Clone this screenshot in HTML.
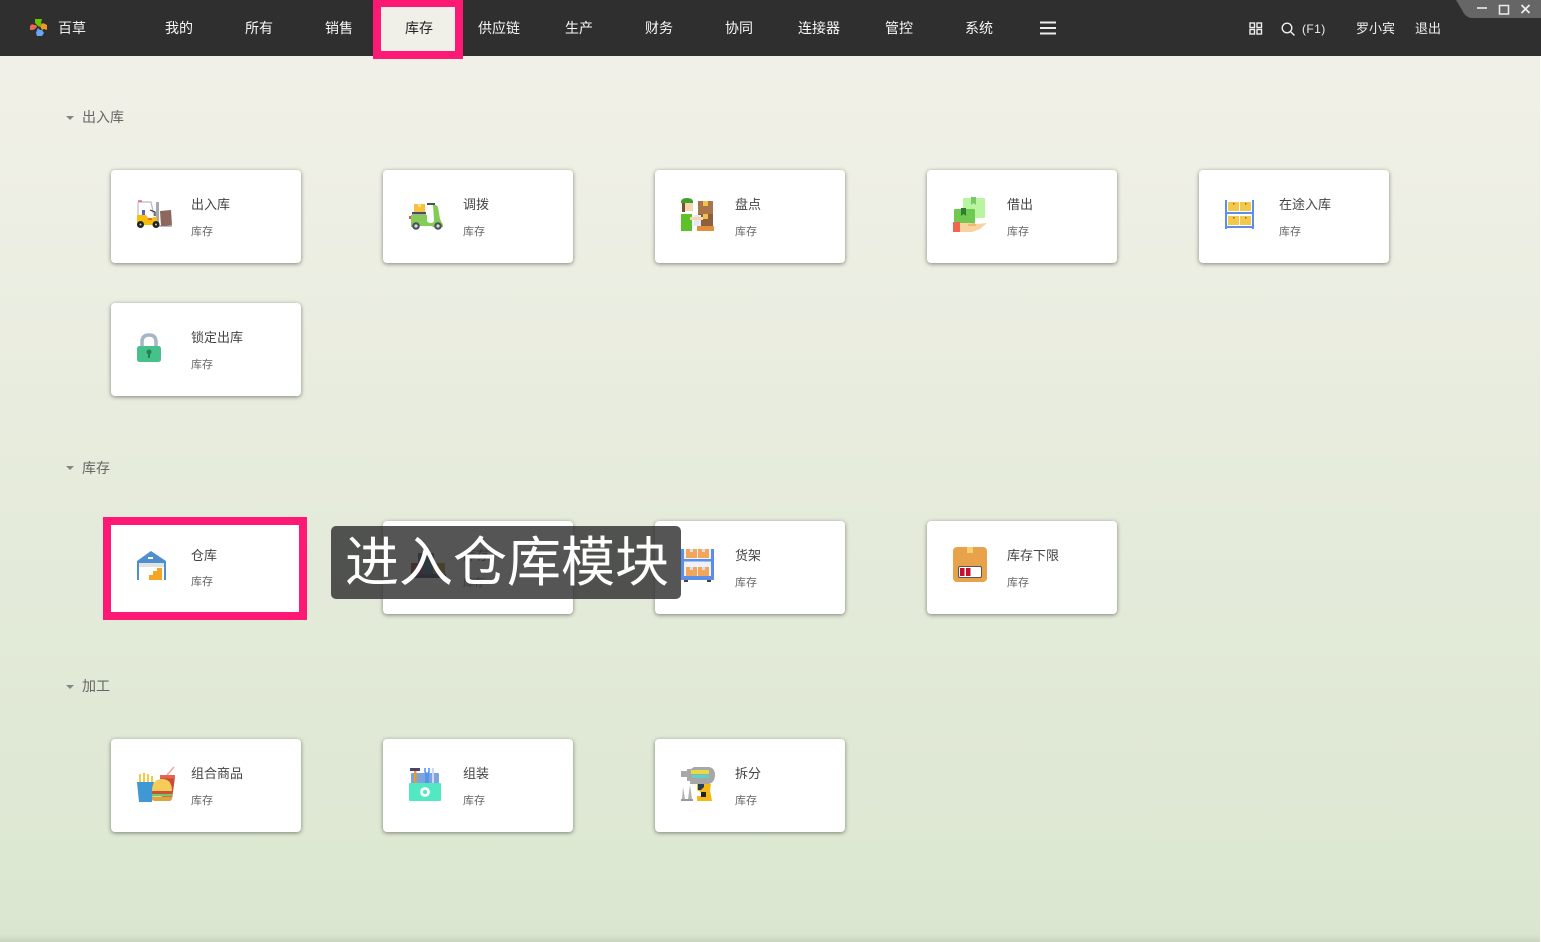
<!DOCTYPE html>
<html lang="zh-CN"><head><meta charset="utf-8"><title>百草</title>
<style>
html,body{margin:0;padding:0}
body{position:relative;width:1541px;height:942px;overflow:hidden;font-family:"Liberation Sans","Noto Sans CJK SC",sans-serif;background:linear-gradient(180deg,#f1f0e8 56px,#e5ebdb 520px,#dce7d1 900px,#dbe6d0 934px,#c9d5c0 942px)}
.t{position:absolute;white-space:nowrap;line-height:20px}
#bar{position:absolute;left:0;top:0;width:1541px;height:56px;background:#2f2f2f}
.n{position:absolute;top:18px;width:80px;text-align:center;color:#f8f8f8;font-size:14px;line-height:20px}
.card{position:absolute;width:190px;height:93px;background:#fff;border-radius:4px;box-shadow:0 1px 4px rgba(0,0,0,.45)}
.card b{position:absolute;left:80px;top:26px;font-weight:400;font-size:13px;line-height:18px;color:#444;white-space:nowrap}
.card i{position:absolute;left:80px;top:54px;font-style:normal;font-size:11px;line-height:16px;color:#666;white-space:nowrap}
.sec{position:absolute;left:82px;font-size:14px;line-height:20px;color:#666}
.tri{position:absolute;left:66px;width:0;height:0;border-left:4.5px solid transparent;border-right:4.5px solid transparent;border-top:4px solid #858585}
svg{position:absolute;left:0;top:0}
</style></head><body>
<div id="bar"></div>
<div class="t" style="left:58px;top:18px;color:#eee;font-size:14px">百草</div>
<div class="n" style="left:139px">我的</div><div class="n" style="left:219px">所有</div><div class="n" style="left:299px">销售</div>
<div style="position:absolute;left:373px;top:-8px;width:74px;height:44px;padding:0;border:8px solid #fe1a74;border-top-width:15px;background:#f1f0e8"></div>
<div class="n" style="left:379px;color:#222">库存</div>
<div class="n" style="left:459px">供应链</div><div class="n" style="left:539px">生产</div><div class="n" style="left:619px">财务</div><div class="n" style="left:699px">协同</div><div class="n" style="left:779px">连接器</div><div class="n" style="left:859px">管控</div><div class="n" style="left:939px">系统</div>
<div class="t" style="left:1302px;top:19px;color:#eee;font-size:12px;letter-spacing:.4px">(F1)</div>
<div class="t" style="left:1356px;top:19px;color:#eee;font-size:13px">罗小宾</div>
<div class="t" style="left:1415px;top:19px;color:#eee;font-size:13px">退出</div>

<div class="tri" style="top:116px"></div><div class="sec" style="top:107px">出入库</div>
<div class="tri" style="top:466px"></div><div class="sec" style="top:458px">库存</div>
<div class="tri" style="top:685px"></div><div class="sec" style="top:676px">加工</div>

<div class="card" style="left:111px;top:170px"><b>出入库</b><i>库存</i></div>
<div class="card" style="left:383px;top:170px"><b>调拨</b><i>库存</i></div>
<div class="card" style="left:655px;top:170px"><b>盘点</b><i>库存</i></div>
<div class="card" style="left:927px;top:170px"><b>借出</b><i>库存</i></div>
<div class="card" style="left:1199px;top:170px"><b>在途入库</b><i>库存</i></div>
<div class="card" style="left:111px;top:303px"><b>锁定出库</b><i>库存</i></div>
<div class="card" style="left:383px;top:521px"><b>库存</b><i>库存</i></div>
<div class="card" style="left:655px;top:521px"><b>货架</b><i>库存</i></div>
<div class="card" style="left:927px;top:521px"><b>库存下限</b><i>库存</i></div>
<div class="card" style="left:111px;top:739px"><b>组合商品</b><i>库存</i></div>
<div class="card" style="left:383px;top:739px"><b>组装</b><i>库存</i></div>
<div class="card" style="left:655px;top:739px"><b>拆分</b><i>库存</i></div>
<div style="position:absolute;left:103px;top:517px;width:188px;height:87px;border:solid #fe1a74;border-width:8px;background:#fff"></div>
<div class="t" style="left:191px;top:546px;font-size:13px;color:#444">仓库</div>
<div class="t" style="left:191px;top:574px;font-size:11px;line-height:16px;color:#666">库存</div>

<svg width="1541" height="942" viewBox="0 0 1541 942">
<!-- logo -->
<path d="M35 19h7l-1 4 1 1-3 3-2-2-2-2z" fill="#6cc404"/>
<path d="M40 26l3-3 4 2v5l-3-1-2 1z" fill="#f09a26"/>
<path d="M38 28l2 2 2 0 2 3-2 3h-5l-1-3 1-3z" fill="#67a6f5"/>
<path d="M37 27l-2 2-2 1-3 0v-4l2-2 2 1 2 0z" fill="#e76a55"/>
<!-- top right -->
<g fill="none" stroke="#eee" stroke-width="1.4"><rect x="1250" y="23" width="4.5" height="4.500"/><rect x="1257" y="23" width="4.5" height="4.500"/><rect x="1250" y="29.500" width="4.5" height="4.500"/><rect x="1257" y="29.500" width="4.5" height="4.500"/><circle cx="1287" cy="28" r="4.800"/><path d="M1290.500 31.500l4 4"/></g>
<path d="M1040 22.500h16M1040 28h16M1040 33.500h16" stroke="#eee" stroke-width="2"/>
<path d="M1456 0h85v18h-70q-6-1-9-8z" fill="#666"/>
<path d="M1477 8h10" stroke="#eee" stroke-width="1.600"/><rect x="1499.500" y="5.500" width="9" height="8.500" fill="none" stroke="#eee" stroke-width="1.500"/><path d="M1521.500 5l8 8m0-8l-8 8" stroke="#eee" stroke-width="1.800"/>
<!-- forklift -->
<path d="M138 202h13l3 14" fill="none" stroke="#b9bcc6" stroke-width="1.300"/><path d="M138 201h4" stroke="#e46" stroke-width="1.200"/><path d="M138 202v14" stroke="#b9bcc6" stroke-width="1.200"/>
<rect x="142" y="210" width="3" height="5" fill="#5a5fd0"/>
<rect x="156" y="202" width="3" height="24" fill="#a5a8b2"/><path d="M150 210l5 2 0 4" stroke="#333" fill="none" stroke-width="1.200"/>
<path d="M137 215h9l3 4 5-2h3v8h-20z" fill="#f8bf08"/><rect x="148" y="218" width="4" height="2" fill="#f06a2c"/>
<path d="M160 211l11-1 1 15-11 1z" fill="#8c675c"/><path d="M159 226h13" stroke="#777" stroke-width="1"/>
<circle cx="140.500" cy="224.500" r="3.500" fill="#222"/><circle cx="156" cy="224.500" r="3.500" fill="#222"/><circle cx="140.500" cy="224.500" r="1" fill="#ccc"/><circle cx="156" cy="224.500" r="1" fill="#ccc"/>
<!-- scooter -->
<rect x="414" y="204" width="11" height="8" fill="#f7c241"/><rect x="418" y="204" width="3" height="3" fill="#fbe08a"/>
<rect x="412" y="212" width="14" height="2.500" fill="#4a4f5c"/>
<path d="M411 215h16v6q1 2 4 2 3 0 3-3l-1-15h3l2 2 2 12 3 6v2h-10l-2-1h-14l-3 1h-3v-4z" fill="#84cc55"/>
<path d="M427 204h8" stroke="#4a4f5c" stroke-width="2"/><rect x="409" y="216" width="2" height="3" fill="#e0534f"/>
<circle cx="416" cy="226" r="3.800" fill="#4a4f5c"/><circle cx="438" cy="226" r="3.800" fill="#4a4f5c"/><circle cx="416" cy="226" r="1.600" fill="#ddd"/><circle cx="438" cy="226" r="1.600" fill="#ddd"/>
<!-- worker -->
<rect x="698" y="201" width="15" height="13" fill="#a9754d"/><rect x="698" y="214" width="15" height="12" fill="#8b5f3f"/><rect x="703" y="201" width="5" height="5" fill="#f0c24b"/><rect x="703" y="214" width="5" height="5" fill="#f0c24b"/>
<rect x="697" y="226" width="17" height="5" fill="#e08f3a"/>
<path d="M681 201q1-3 6-3t6 3v2h-12z" fill="#41a02a"/><rect x="684" y="203" width="9" height="8" fill="#f5d6ae"/><rect x="682" y="203" width="3" height="9" fill="#7a4f32"/>
<path d="M681 214h11v17h-11z" fill="#5cc12a"/><rect x="694" y="215" width="7" height="11" fill="#e6e9f2"/><path d="M690 217h13v3h-13z" fill="#f5d6ae"/>
<!-- borrow -->
<rect x="963" y="198" width="22" height="20" rx="1" fill="#b8f5a0"/><path d="M971 197h5v8l-2.500-2-2.500 2z" fill="#7cc56a"/>
<rect x="954" y="209" width="21" height="18" rx="1" fill="#6fc94e"/><path d="M961 208h5v8l-2.500-2-2.500 2z" fill="#2e7d32"/>
<path d="M960 223h9q5 0 9 1l9-1-7 6-8 3h-12z" fill="#f8d3a0"/><rect x="953" y="222" width="7" height="10" fill="#f0664f"/><path d="M968 225h8" stroke="#ea9c3b" stroke-width="1"/>
<!-- shelf -->
<g fill="#f4c84a"><rect x="1228" y="202" width="11" height="9"/><rect x="1240" y="202" width="11" height="9"/><rect x="1228" y="216" width="11" height="9"/><rect x="1240" y="216" width="11" height="9"/></g>
<g fill="#8a6d2a"><rect x="1233" y="203" width="1.500" height="1.500"/><rect x="1245" y="203" width="1.500" height="1.500"/><rect x="1233" y="217" width="1.500" height="1.500"/><rect x="1245" y="217" width="1.500" height="1.500"/></g>
<g fill="#5e8fe8"><rect x="1225" y="200" width="2" height="29"/><rect x="1252" y="200" width="2" height="29"/><rect x="1225" y="212" width="29" height="2"/><rect x="1225" y="226" width="29" height="2"/></g>
<!-- lock -->
<path d="M142 347v-5q0-7 7-7t7 7v5" fill="none" stroke="#a7b5c4" stroke-width="3.500"/>
<rect x="137" y="346" width="24" height="16" rx="2.500" fill="#46c18a"/><circle cx="149" cy="352" r="2.500" fill="#25805a"/><rect x="148" y="353" width="2" height="5" fill="#25805a"/>
<!-- warehouse -->
<path d="M137 561l14-10 15 10v19h-2v-17h-25v17h-2z" fill="#4f8fd0"/><rect x="139" y="563" width="25" height="4" fill="#e2e2e2"/><rect x="148" y="557" width="5" height="2" fill="#fff"/>
<path d="M149 580v-5h4v-4h4v-3h5v12z" fill="#f5a623"/>
<!-- hidden icon -->
<rect x="418" y="553" width="16" height="22" fill="#1e5f80"/><rect x="411" y="563" width="12" height="12" fill="#a52a33"/><rect x="433" y="563" width="12" height="12" fill="#b58b12"/><rect x="411" y="574" width="35" height="4" fill="#3a2a70"/>
<!-- rack -->
<rect x="684" y="549" width="27" height="27" fill="#eef2fc"/>
<g fill="#f3a55a"><rect x="686" y="549" width="11" height="9"/><rect x="698" y="549" width="11" height="9"/><rect x="686" y="567" width="11" height="9"/><rect x="698" y="567" width="11" height="9"/></g>
<g fill="#d9dff0"><rect x="690" y="549" width="3" height="3"/><rect x="702" y="549" width="3" height="3"/><rect x="690" y="567" width="3" height="3"/><rect x="702" y="567" width="3" height="3"/></g>
<g fill="#5e8fe8"><rect x="681" y="549" width="3" height="31"/><rect x="711" y="549" width="3" height="31"/><rect x="681" y="559" width="33" height="2.500"/><rect x="681" y="576" width="33" height="4"/></g>
<rect x="684" y="580" width="4" height="2" fill="#444"/><rect x="707" y="580" width="4" height="2" fill="#444"/>
<!-- low stock -->
<rect x="953" y="547" width="34" height="35" rx="4" fill="#e8a24c"/><rect x="967" y="547" width="6" height="6" fill="#f8d070"/>
<rect x="958.500" y="566.500" width="23" height="11" rx="1.500" fill="#fff" stroke="#555" stroke-width="1"/><rect x="960" y="568" width="4.500" height="8" fill="#c8102e"/><rect x="966" y="568" width="4.500" height="8" fill="#c8102e"/>
<!-- combo -->
<path d="M167 775l7-8" stroke="#f5a3a8" stroke-width="1.500"/>
<path d="M160 777h15l-3 22h-10z" fill="#c9493a"/><rect x="160" y="775" width="15" height="3.500" fill="#e0684e"/>
<path d="M139 774h2v8h-2zM143 773h2v9h-2zM147 774h2v8h-2zM151 776h2v6h-2z" fill="#f6c945"/>
<path d="M137 782h17l-2 20h-13z" fill="#3f97d3"/>
<path d="M152 791q0-12 10-12t10 12z" fill="#f5cd56"/><rect x="152" y="791" width="20" height="3" fill="#c9503e"/><rect x="152" y="794" width="20" height="2.500" fill="#7ec462"/><path d="M152 797h20v1q0 3-3 3h-14q-3 0-3-3z" fill="#e5a03e"/>
<!-- tools -->
<rect x="411" y="773" width="28" height="11" rx="1" fill="#7ea4e0"/>
<rect x="414" y="769" width="2.500" height="15" fill="#ec9a26"/><rect x="410" y="768" width="10" height="3" fill="#4b4470"/>
<path d="M425 768v4l1 1v11h2v-11l1-1v-4" stroke="#4a8ef0" fill="none" stroke-width="1.500"/><path d="M433 768v16" stroke="#cfd7ff" stroke-width="2"/>
<rect x="409" y="783" width="32" height="18" rx="1" fill="#52e8c2"/><circle cx="425" cy="792" r="3.500" fill="none" stroke="#fff" stroke-width="2.800"/>
<!-- drill -->
<path d="M681 771h6v-2l4 0 3-2h15q6 1 6 8t-6 9h-19v-3h-3v-4h-6z" fill="#a7a7a7"/><rect x="691" y="770" width="18" height="4" fill="#e7d94a"/><rect x="692" y="775" width="17" height="3" fill="#56d6c6"/>
<path d="M697 784h14l-1 6 2 11h-15v-5h6l-1-3-5-3z" fill="#f4b914"/><path d="M698 784h6v3l-3 3h-3z" fill="#25405a"/><path d="M701 792h5v5h-5z" fill="#222"/>
<path d="M683 787l2 12h-3zM690 785l2 14h-4z" fill="#b2b2b2"/><path d="M681 800h12" stroke="#333" stroke-width="1"/>
</svg>

<div style="position:absolute;left:331px;top:526px;width:350px;height:73px;background:rgba(48,48,48,.82);border-radius:5px"></div>
<div class="t" style="left:345px;top:528px;font-size:54px;line-height:70px;font-weight:400;color:#fff">进入仓库模块</div>
<div style="position:absolute;left:1540px;top:56px;width:1px;height:886px;background:#fff"></div>
</body></html>
